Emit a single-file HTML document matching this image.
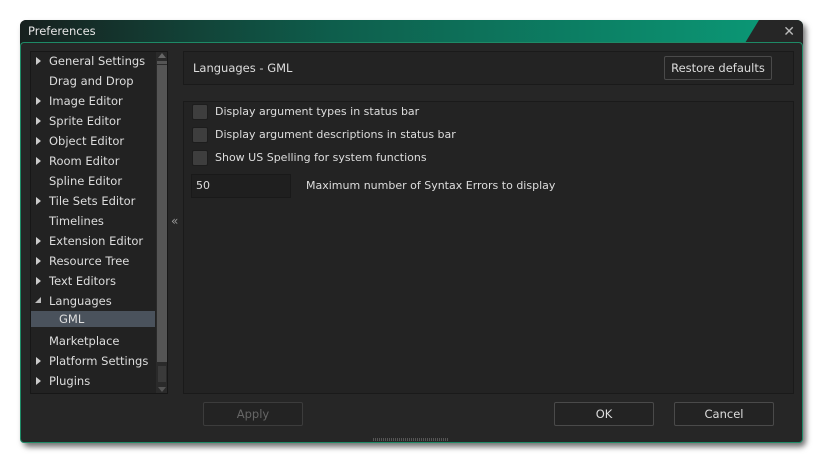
<!DOCTYPE html>
<html><head><style>
*{margin:0;padding:0;box-sizing:border-box}
body{width:823px;height:463px;background:#fff;position:relative;overflow:hidden;font-family:"DejaVu Sans","Liberation Sans",sans-serif;font-size:11px;color:#ddd}
.win{position:absolute;left:20px;top:20px;width:783px;height:423px;border-radius:6px;background:#262626;box-shadow:3px 4px 6px rgba(0,0,0,.55)}
.title{position:absolute;left:0;top:0;width:783px;height:23px;border-radius:6px 6px 0 0;background:linear-gradient(90deg,#17201e 0%,#0e5e4c 40%,#0b9775 95%);color:#e6e6e6;font-size:11.5px;line-height:23px;padding-left:8px}
.tab{position:absolute;right:0;top:0;width:58px;height:23px;background:#262626;clip-path:polygon(14px 0,100% 0,100% 100%,0 100%);border-radius:0 6px 0 0}
.x{position:absolute;right:8px;top:3px;color:#bbb;font-size:14px;font-family:"Liberation Sans",sans-serif}
.body{position:absolute;left:0;top:22px;width:783px;height:401px;border:1px solid #1e8a66;border-radius:4px;background:#262626}
.list{position:absolute;left:30px;top:51px;width:138px;height:343px;border:1px solid #171717;background:#222}
.it{position:absolute;left:18px;height:20px;line-height:20px;font-size:11.5px;color:#ddd}
.ar{position:absolute;left:6px;width:0;height:0;border-top:4px solid transparent;border-bottom:4px solid transparent;border-left:5px solid #ccc}
.sb{position:absolute;left:156px;top:52px;width:11px;height:341px;background:#2a2a2a}
.panel{position:absolute;border:1px solid #1a1a1a;background:#232323}
.btn{position:absolute;height:24px;border:1px solid #4a4a4a;border-radius:2px;background:#232323;text-align:center;line-height:22px;color:#ddd;font-size:11.5px}
.cb{position:absolute;left:192px;width:16px;height:16px;background:#3e3e3e;border:1px solid #1d1d1d;border-radius:2px}
.lb{position:absolute;left:215px;line-height:16px}
</style></head><body>
<div class="win">
<div class="title">Preferences</div>
<div class="tab"></div><div class="x">✕</div>
<div class="body"></div>
</div>
<div class="list"></div>
<div style="position:absolute;left:31px;top:311px;width:124px;height:16px;background:#4a525c"></div>
<div class="it" style="top:51px;left:49px">General Settings</div><div class="ar" style="top:57px;left:36px"></div>
<div class="it" style="top:71px;left:49px">Drag and Drop</div>
<div class="it" style="top:91px;left:49px">Image Editor</div><div class="ar" style="top:97px;left:36px"></div>
<div class="it" style="top:111px;left:49px">Sprite Editor</div><div class="ar" style="top:117px;left:36px"></div>
<div class="it" style="top:131px;left:49px">Object Editor</div><div class="ar" style="top:137px;left:36px"></div>
<div class="it" style="top:151px;left:49px">Room Editor</div><div class="ar" style="top:157px;left:36px"></div>
<div class="it" style="top:171px;left:49px">Spline Editor</div>
<div class="it" style="top:191px;left:49px">Tile Sets Editor</div><div class="ar" style="top:197px;left:36px"></div>
<div class="it" style="top:211px;left:49px">Timelines</div>
<div class="it" style="top:231px;left:49px">Extension Editor</div><div class="ar" style="top:237px;left:36px"></div>
<div class="it" style="top:251px;left:49px">Resource Tree</div><div class="ar" style="top:257px;left:36px"></div>
<div class="it" style="top:271px;left:49px">Text Editors</div><div class="ar" style="top:277px;left:36px"></div>
<div class="it" style="top:291px;left:49px">Languages</div>
<div style="position:absolute;left:35px;top:297px;width:0;height:0;border-left:6px solid transparent;border-bottom:6px solid #bbb"></div>
<div class="it" style="top:309px;left:59px">GML</div>
<div class="it" style="top:331px;left:49px">Marketplace</div>
<div class="it" style="top:351px;left:49px">Platform Settings</div><div class="ar" style="top:357px;left:36px"></div>
<div class="it" style="top:371px;left:49px">Plugins</div><div class="ar" style="top:377px;left:36px"></div>
<div class="sb"></div>
<div style="position:absolute;left:158px;top:53px;border-left:4px solid transparent;border-right:4px solid transparent;border-bottom:5px solid #666"></div>
<div style="position:absolute;left:157px;top:61px;width:10px;height:3px;background:#555"></div>
<div style="position:absolute;left:157px;top:65px;width:10px;height:297px;background:#555"></div>
<div style="position:absolute;left:158px;top:366px;width:8px;height:16px;background:#3a3a3a"></div>
<div style="position:absolute;left:158px;top:387px;border-left:4px solid transparent;border-right:4px solid transparent;border-top:5px solid #555"></div>
<div style="position:absolute;left:171px;top:214px;color:#999;font-size:12px">«</div>
<div class="panel" style="left:183px;top:51px;width:611px;height:34px"></div>
<div style="position:absolute;left:193px;top:60px;line-height:16px;font-size:11.5px">Languages - GML</div>
<div class="btn" style="left:664px;top:56px;width:108px">Restore defaults</div>
<div class="panel" style="left:183px;top:101px;width:611px;height:293px"></div>
<div class="cb" style="top:104px"></div><div class="lb" style="top:104px">Display argument types in status bar</div>
<div class="cb" style="top:127px"></div><div class="lb" style="top:127px">Display argument descriptions in status bar</div>
<div class="cb" style="top:150px"></div><div class="lb" style="top:150px">Show US Spelling for system functions</div>
<div style="position:absolute;left:191px;top:174px;width:100px;height:24px;background:#1f1f1f;border:1px solid #191919;padding-left:4px;line-height:22px">50</div>
<div style="position:absolute;left:306px;top:178px;line-height:16px">Maximum number of Syntax Errors to display</div>
<div class="btn" style="left:203px;top:402px;width:100px;color:#666;border-color:#3c3c3c">Apply</div>
<div class="btn" style="left:554px;top:402px;width:100px">OK</div>
<div class="btn" style="left:674px;top:402px;width:100px">Cancel</div>
<div style="position:absolute;left:373px;top:438px;width:76px;height:3px;background:repeating-linear-gradient(90deg,#555 0 1px,transparent 1px 2px)"></div>
</body></html>
